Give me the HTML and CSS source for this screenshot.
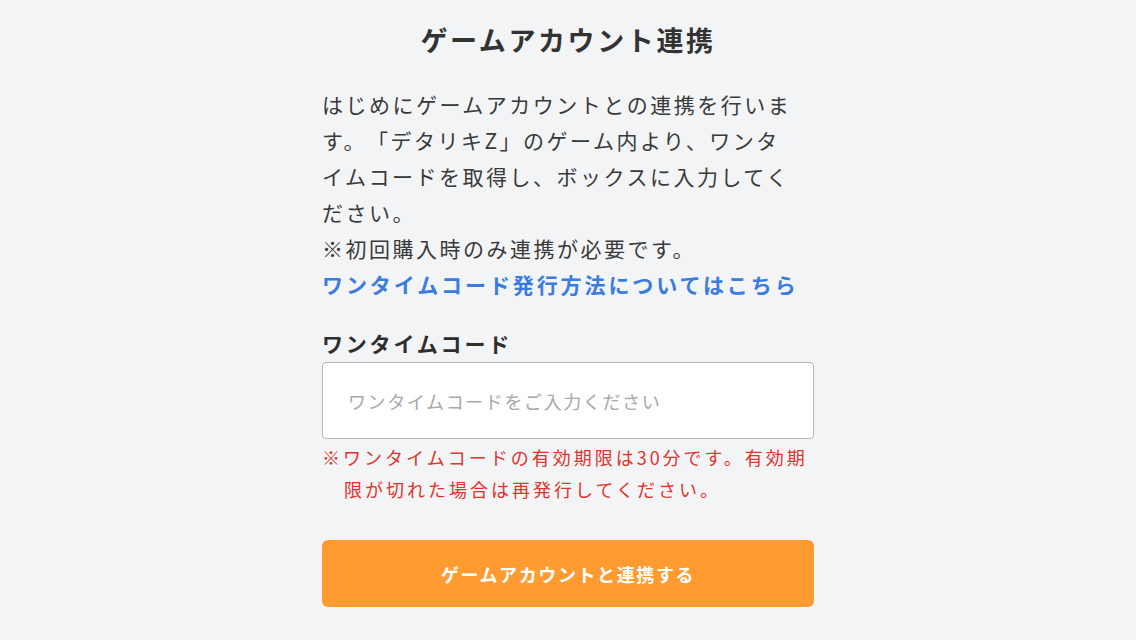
FILE: index.html
```html
<!DOCTYPE html>
<html lang="ja">
<head>
    <meta charset="UTF-8">
    <meta name="viewport" content="width=device-width, initial-scale=1.0">
    <title>ゲームアカウント連携</title>
    <link rel="stylesheet" href="styles.css">
</head>
<body>
    <div class="container">
        <!-- タイトル -->
        <h1 class="page-title">ゲームアカウント連携</h1>

        <!-- 説明文 -->
        <p class="intro">
            はじめにゲームアカウントとの連携を行いま<br>す。「デタリキZ」のゲーム内より、ワンタ<br>イムコードを取得し、ボックスに入力してく<br>ださい。<br>
            ※初回購入時のみ連携が必要です。<br>
            <a href="#" class="help-link">ワンタイムコード発行方法についてはこちら</a>
        </p>

        <!-- 入力欄 -->
        <label class="field-label" for="otp">ワンタイムコード</label>
        <input type="text" id="otp" class="code-input" placeholder="ワンタイムコードをご入力ください">
        <p class="code-note">※ワンタイムコードの有効期限は30分です。有効期限が切れた場合は再発行してください。</p>

        <!-- 連携ボタン -->
        <button class="link-button">ゲームアカウントと連携する</button>
    </div>
</body>
</html>
```

FILE: styles.css
```css
* {
    margin: 0;
    padding: 0;
    box-sizing: border-box;
}

body {
    font-family: "Noto Sans CJK JP", "Noto Sans", sans-serif;
    background: #f3f4f6;
    color: #333;
}

.container {
    width: 492px;
    margin: 0 auto;
    padding-top: 20px;
    display: flex;
    flex-direction: column;
}

.page-title {
    font-size: 27px;
    line-height: 40px;
    font-weight: bold;
    letter-spacing: 2.6px;
    text-align: center;
    color: #333;
}

/* 説明文は1行21文字で改行 */
.intro {
    margin-top: 26px;
    margin-right: -8px;
    font-size: 21px;
    line-height: 36px;
    letter-spacing: 2.5px;
    text-spacing-trim: space-all;
    color: #3a3a3a;
}

.help-link {
    color: #3b7ce0;
    font-weight: bold;
    text-decoration: none;
    letter-spacing: 2.9px;
}

.field-label {
    margin-top: 26px;
    font-size: 21px;
    line-height: 30px;
    font-weight: bold;
    letter-spacing: 2.8px;
    color: #2e2e2e;
}

.code-input {
    margin-top: 4px;
    width: 100%;
    height: 77px;
    padding: 0 25px;
    background: white;
    border: 1px solid #b8b8b8;
    border-radius: 4px;
    font-family: inherit;
    font-size: 18px;
    letter-spacing: 1.6px;
    color: #333;
    outline: none;
}

.code-input::placeholder {
    color: #a8a8a8;
}

.code-note {
    margin-top: 2px;
    padding-left: 22px;
    text-indent: -22px;
    font-size: 18px;
    line-height: 32px;
    letter-spacing: 3px;
    color: #e0332b;
}

.link-button {
    margin-top: 35px;
    width: 100%;
    height: 67px;
    background: #ff9b31;
    color: white;
    border: none;
    border-radius: 6px;
    font-family: inherit;
    font-size: 18px;
    font-weight: bold;
    letter-spacing: 1.6px;
    cursor: pointer;
}
```
